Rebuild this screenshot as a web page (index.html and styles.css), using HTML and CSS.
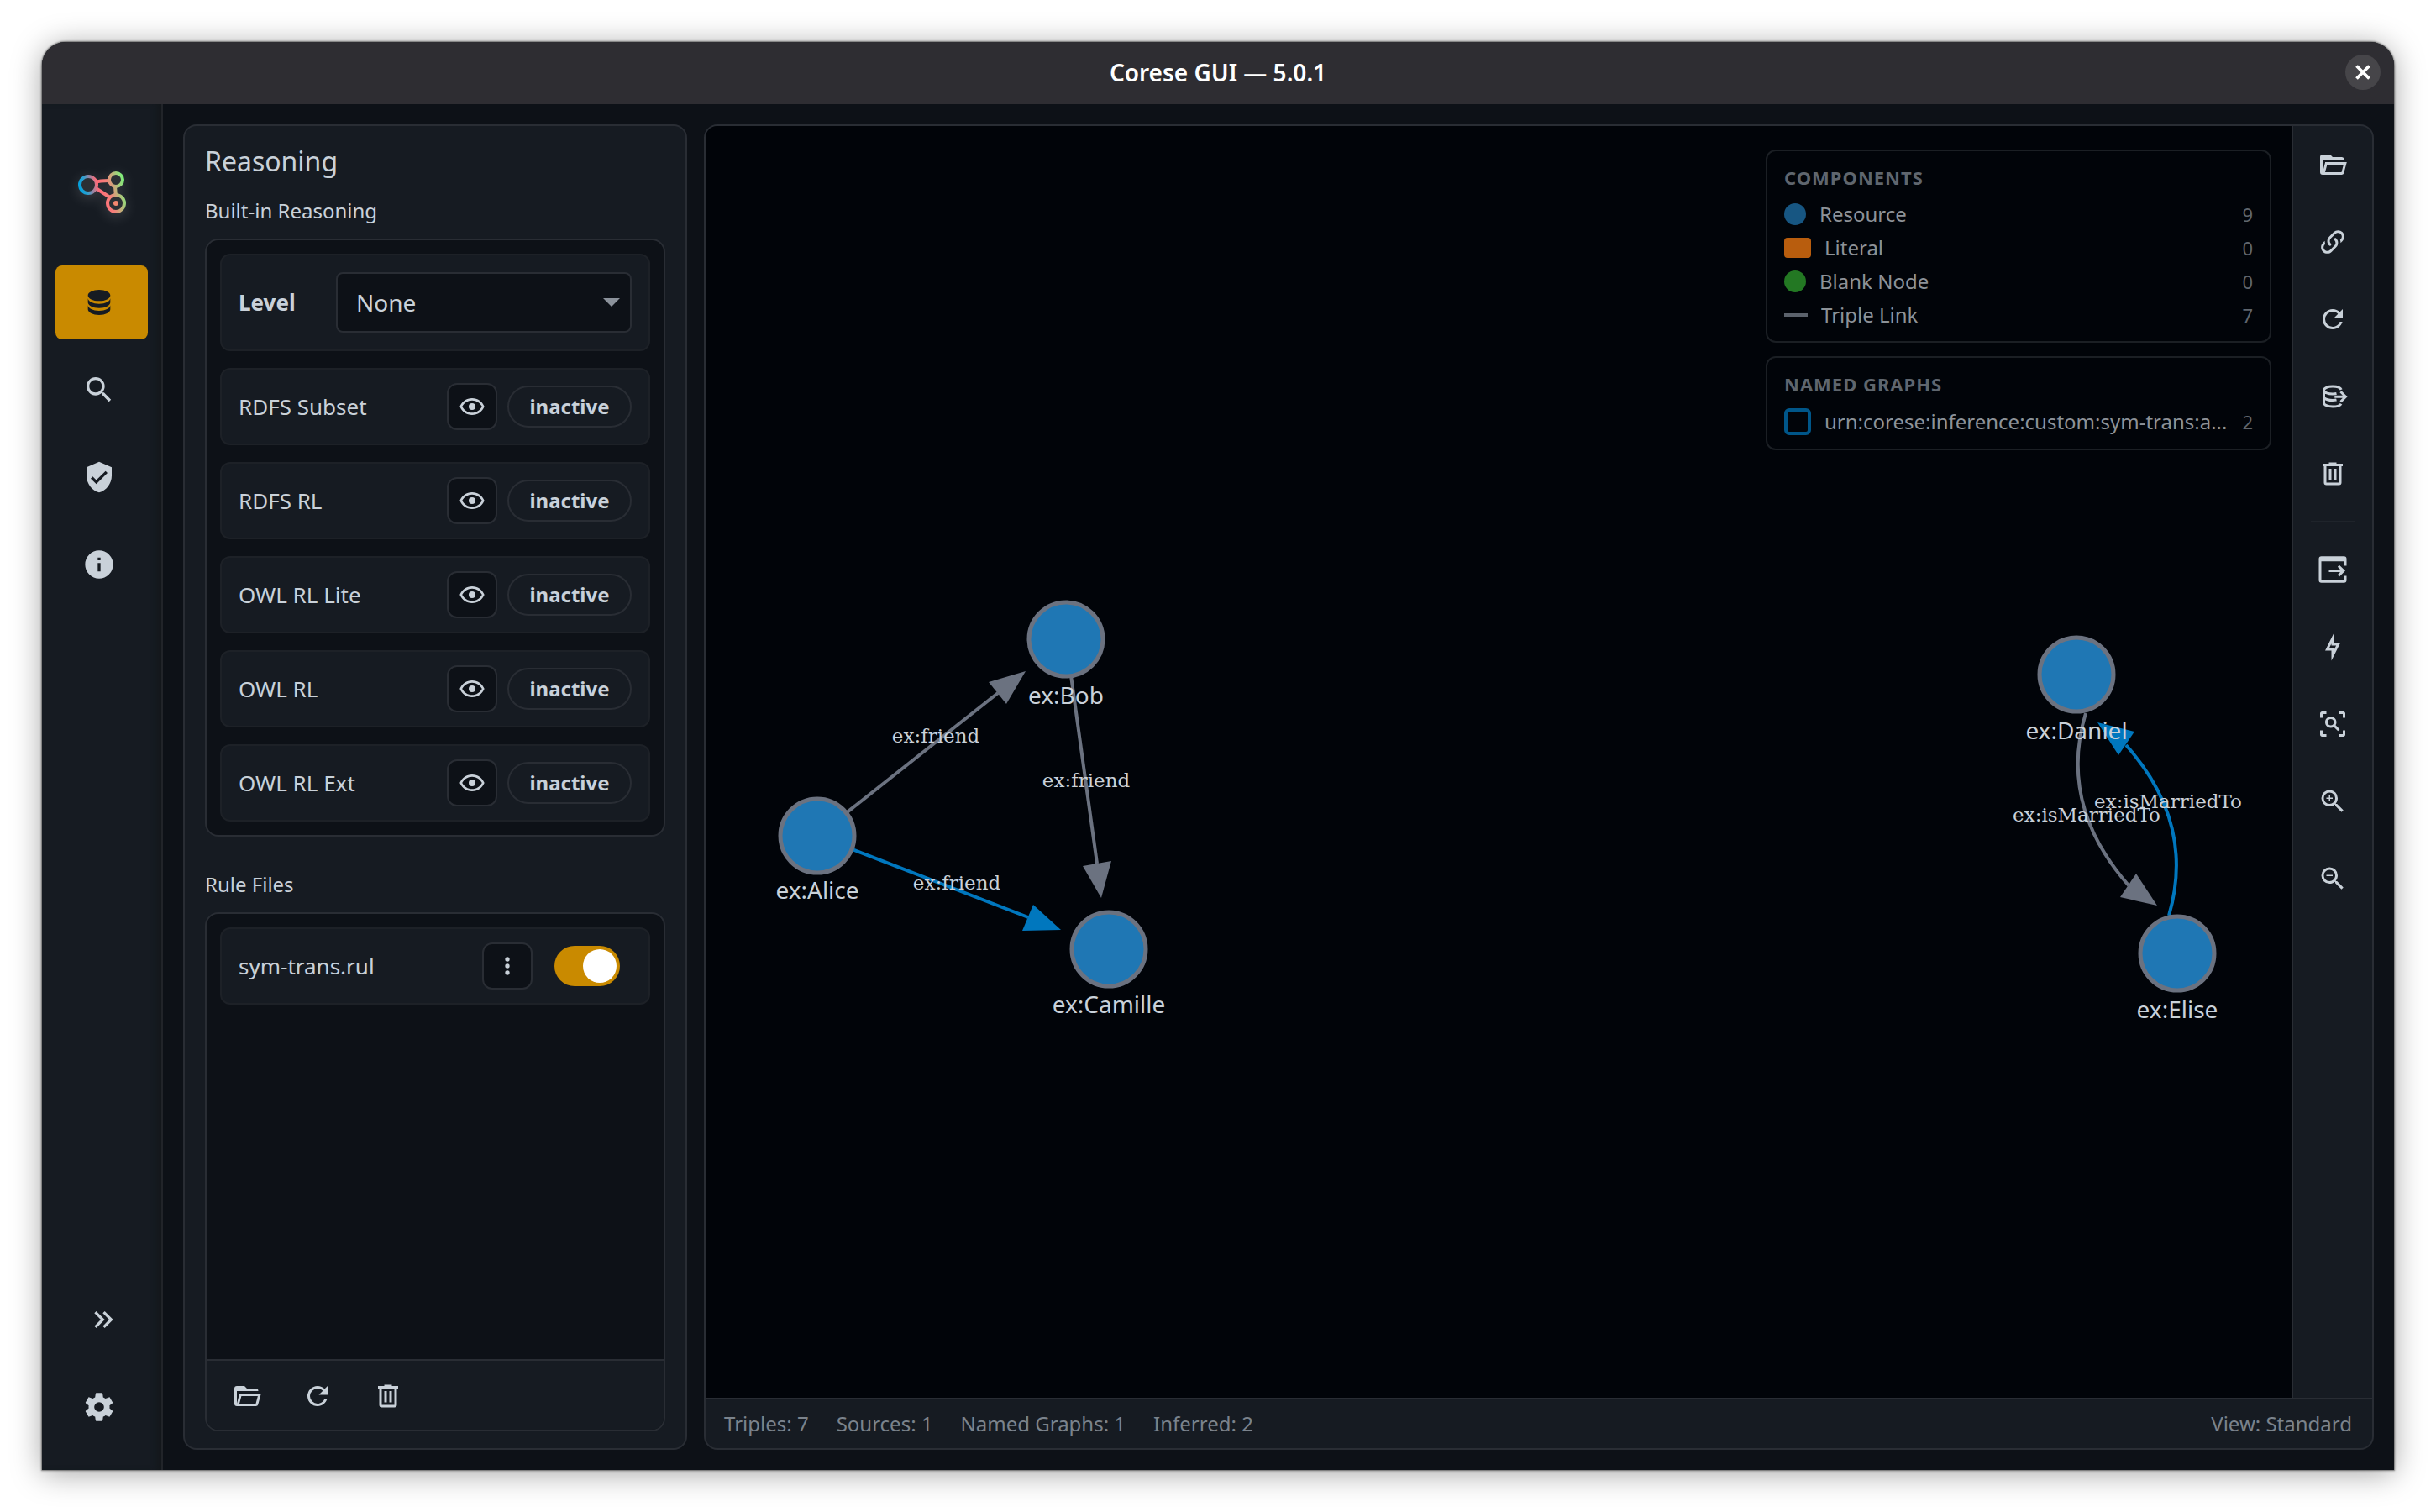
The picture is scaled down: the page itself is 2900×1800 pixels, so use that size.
FILE: index.html
```html
<!DOCTYPE html>
<html lang="en">
<head>
    <meta charset="UTF-8">
    <meta name="viewport" content="width=device-width, initial-scale=1.0">
    <title>Corese GUI — 5.0.1</title>
    <link rel="stylesheet" href="styles.css">
</head>
<body>
    <!-- Icon set -->
    <svg class="icon-defs" aria-hidden="true">
        <symbol id="i-database" viewBox="0 0 24 24"><path d="M12,3C7.58,3 4,4.79 4,7C4,9.21 7.58,11 12,11C16.42,11 20,9.21 20,7C20,4.79 16.42,3 12,3M4,9V12C4,14.21 7.58,16 12,16C16.42,16 20,14.21 20,12V9C20,11.21 16.42,13 12,13C7.58,13 4,11.21 4,9M4,14V17C4,19.21 7.58,21 12,21C16.42,21 20,19.21 20,17V14C20,16.21 16.42,18 12,18C7.58,18 4,16.21 4,14Z"/></symbol>
        <symbol id="i-search" viewBox="0 0 24 24"><path d="M9.5,3A6.5,6.5 0 0,1 16,9.5C16,11.11 15.41,12.59 14.44,13.73L14.71,14H15.5L20.5,19L19,20.5L14,15.5V14.71L13.73,14.44C12.59,15.41 11.11,16 9.5,16A6.5,6.5 0 0,1 3,9.5A6.5,6.5 0 0,1 9.5,3M9.5,5C7,5 5,7 5,9.5C5,12 7,14 9.5,14C12,14 14,12 14,9.5C14,7 12,5 9.5,5Z"/></symbol>
        <symbol id="i-shield" viewBox="0 0 24 24"><path d="M10,17L6,13L7.41,11.59L10,14.17L16.59,7.58L18,9M12,1L3,5V11C3,16.55 6.84,21.74 12,23C17.16,21.74 21,16.55 21,11V5L12,1Z"/></symbol>
        <symbol id="i-info" viewBox="0 0 24 24"><path d="M13,9H11V7H13M13,17H11V11H13M12,2A10,10 0 0,0 2,12A10,10 0 0,0 12,22A10,10 0 0,0 22,12A10,10 0 0,0 12,2Z"/></symbol>
        <symbol id="i-expand" viewBox="0 0 24 24"><path d="M5.59,7.41L7,6L13,12L7,18L5.59,16.59L10.17,12L5.59,7.41M11.59,7.41L13,6L19,12L13,18L11.59,16.59L16.17,12L11.59,7.41Z"/></symbol>
        <symbol id="i-cog" viewBox="0 0 24 24"><path d="M12,15.5A3.5,3.5 0 0,1 8.5,12A3.5,3.5 0 0,1 12,8.5A3.5,3.5 0 0,1 15.5,12A3.5,3.5 0 0,1 12,15.5M19.43,12.97C19.47,12.65 19.5,12.33 19.5,12C19.5,11.67 19.47,11.34 19.43,11L21.54,9.37C21.73,9.22 21.78,8.95 21.66,8.73L19.66,5.27C19.54,5.05 19.27,4.96 19.05,5.05L16.56,6.05C16.04,5.66 15.5,5.32 14.87,5.07L14.5,2.42C14.46,2.18 14.25,2 14,2H10C9.75,2 9.54,2.18 9.5,2.42L9.13,5.07C8.5,5.32 7.96,5.66 7.44,6.05L4.95,5.05C4.73,4.96 4.46,5.05 4.34,5.27L2.34,8.73C2.21,8.95 2.27,9.22 2.46,9.37L4.57,11C4.53,11.34 4.5,11.67 4.5,12C4.5,12.33 4.53,12.65 4.57,12.97L2.46,14.63C2.27,14.78 2.21,15.05 2.34,15.27L4.34,18.73C4.46,18.95 4.73,19.03 4.95,18.95L7.44,17.94C7.96,18.34 8.5,18.68 9.13,18.93L9.5,21.58C9.54,21.82 9.75,22 10,22H14C14.25,22 14.46,21.82 14.5,21.58L14.87,18.93C15.5,18.67 16.04,18.34 16.56,17.94L19.05,18.95C19.27,19.03 19.54,18.95 19.66,18.73L21.66,15.27C21.78,15.05 21.73,14.78 21.54,14.63L19.43,12.97Z"/></symbol>
        <symbol id="i-eye" viewBox="0 0 24 24"><path d="M12,9A3,3 0 0,1 15,12A3,3 0 0,1 12,15A3,3 0 0,1 9,12A3,3 0 0,1 12,9M12,4.5C17,4.5 21.27,7.61 23,12C21.27,16.39 17,19.5 12,19.5C7,19.5 2.73,16.39 1,12C2.73,7.61 7,4.5 12,4.5M3.18,12C4.83,15.36 8.24,17.5 12,17.5C15.76,17.5 19.17,15.36 20.82,12C19.17,8.64 15.76,6.5 12,6.5C8.24,6.5 4.83,8.64 3.18,12Z"/></symbol>
        <symbol id="i-dots" viewBox="0 0 24 24"><path d="M12,16A2,2 0 0,1 14,18A2,2 0 0,1 12,20A2,2 0 0,1 10,18A2,2 0 0,1 12,16M12,10A2,2 0 0,1 14,12A2,2 0 0,1 12,14A2,2 0 0,1 10,12A2,2 0 0,1 12,10M12,4A2,2 0 0,1 14,6A2,2 0 0,1 12,8A2,2 0 0,1 10,6A2,2 0 0,1 12,4Z"/></symbol>
        <symbol id="i-folder" viewBox="0 0 24 24"><path d="M6.1,10L4,18V8H21A2,2 0 0,0 19,6H12L10,4H4A2,2 0 0,0 2,6V18A2,2 0 0,0 4,20H19C19.9,20 20.7,19.4 20.9,18.5L23.2,10H6.1M19,18H6L7.6,12H20.6L19,18Z"/></symbol>
        <symbol id="i-link" viewBox="0 0 24 24"><path d="M10.59,13.41C11,13.8 11,14.44 10.59,14.83C10.2,15.22 9.56,15.22 9.17,14.83C7.22,12.88 7.22,9.71 9.17,7.76V7.76L12.71,4.22C14.66,2.27 17.83,2.27 19.78,4.22C21.73,6.17 21.73,9.34 19.78,11.29L18.29,12.78C18.3,11.96 18.17,11.14 17.89,10.36L18.36,9.88C19.54,8.71 19.54,6.81 18.36,5.64C17.19,4.46 15.29,4.46 14.12,5.64L10.59,9.17C9.41,10.34 9.41,12.24 10.59,13.41M13.41,9.17C13.8,8.78 14.44,8.78 14.83,9.17C16.78,11.12 16.78,14.29 14.83,16.24V16.24L11.29,19.78C9.34,21.73 6.17,21.73 4.22,19.78C2.27,17.83 2.27,14.66 4.22,12.71L5.71,11.22C5.7,12.04 5.83,12.86 6.11,13.65L5.64,14.12C4.46,15.29 4.46,17.19 5.64,18.36C6.81,19.54 8.71,19.54 9.88,18.36L13.41,14.83C14.59,13.66 14.59,11.76 13.41,10.59C13,10.2 13,9.56 13.41,9.17Z"/></symbol>
        <symbol id="i-refresh" viewBox="0 0 24 24"><path d="M17.65,6.35C16.2,4.9 14.21,4 12,4A8,8 0 0,0 4,12A8,8 0 0,0 12,20C15.73,20 18.84,17.45 19.73,14H17.65C16.83,16.33 14.61,18 12,18A6,6 0 0,1 6,12A6,6 0 0,1 12,6C13.66,6 15.14,6.69 16.22,7.78L13,11H20V4L17.65,6.35Z"/></symbol>
        <symbol id="i-db-export" viewBox="0 0 24 24"><path fill="none" stroke="currentColor" stroke-width="2" d="M18.8,6.6C18.2,5.1 15.4,4 12,4C8.1,4 5,5.3 5,7V17C5,18.7 8.1,20 12,20C15.2,20 17.9,19.1 18.7,17.8M5,7.5C6,9.2 8.8,10 12,10C13.2,10 14,9.9 15,9.7M5,13C6.5,14.3 9,15 12,15C13.2,15 14,14.9 15,14.7M13.5,12.2H22M18.3,8.2L22.3,12.2L18.3,16.2"/></symbol>
        <symbol id="i-trash" viewBox="0 0 24 24"><path d="M9,3V4H4V6H5V19A2,2 0 0,0 7,21H17A2,2 0 0,0 19,19V6H20V4H15V3H9M7,6H17V19H7V6M9,8V17H11V8H9M13,8V17H15V8H13Z"/></symbol>
        <symbol id="i-export" viewBox="0 0 24 24"><path d="M3,1.5H21A2,2 0 0,1 23,3.5V9H21V5.5H3V20.5H21V17H23V20.5A2,2 0 0,1 21,22.5H3A2,2 0 0,1 1,20.5V3.5A2,2 0 0,1 3,1.5M9,12H18L15.9,9.9L17.3,8.5L22,13L17.3,17.6L15.9,16.2L18,14H9V12Z"/></symbol>
        <symbol id="i-bolt" viewBox="0 0 24 24"><path d="M11,9.47V11H14.76L13,14.53V13H9.24L11,9.47M13,1L6,15H11V23L18,9H13V1Z"/></symbol>
        <symbol id="i-scan" viewBox="0 0 24 24"><path d="M17,22V20H20V17H22V20.5C22,20.89 21.84,21.24 21.54,21.54C21.24,21.84 20.89,22 20.5,22H17M7,22H3.5C3.11,22 2.76,21.84 2.46,21.54C2.16,21.24 2,20.89 2,20.5V17H4V20H7V22M17,2H20.5C20.89,2 21.24,2.16 21.54,2.46C21.84,2.76 22,3.11 22,3.5V7H20V4H17V2M7,2V4H4V7H2V3.5C2,3.11 2.16,2.76 2.46,2.46C2.76,2.16 3.11,2 3.5,2H7M10.5,6C13,6 15,8 15,10.5C15,11.38 14.75,12.2 14.31,12.9L17.57,16.16L16.16,17.57L12.9,14.31C12.2,14.75 11.38,15 10.5,15C8,15 6,13 6,10.5C6,8 8,6 10.5,6M10.5,8C9.12,8 8,9.12 8,10.5C8,11.88 9.12,13 10.5,13C11.88,13 13,11.88 13,10.5C13,9.12 11.88,8 10.5,8Z"/></symbol>
        <symbol id="i-zoom-in" viewBox="0 0 24 24"><path d="M15.5,14L20.5,19L19,20.5L14,15.5V14.71L13.73,14.43C12.59,15.41 11.11,16 9.5,16A6.5,6.5 0 0,1 3,9.5A6.5,6.5 0 0,1 9.5,3A6.5,6.5 0 0,1 16,9.5C16,11.11 15.41,12.59 14.43,13.73L14.71,14H15.5M9.5,14C12,14 14,12 14,9.5C14,7 12,5 9.5,5C7,5 5,7 5,9.5C5,12 7,14 9.5,14M12,10H10V12H9V10H7V9H9V7H10V9H12V10Z"/></symbol>
        <symbol id="i-zoom-out" viewBox="0 0 24 24"><path d="M15.5,14H14.71L14.43,13.73C15.41,12.59 16,11.11 16,9.5A6.5,6.5 0 0,0 9.5,3A6.5,6.5 0 0,0 3,9.5A6.5,6.5 0 0,0 9.5,16C11.11,16 12.59,15.41 13.73,14.43L14,14.71V15.5L19,20.5L20.5,19L15.5,14M9.5,14C7,14 5,12 5,9.5C5,7 7,5 9.5,5C12,5 14,7 14,9.5C14,12 12,14 9.5,14M7,9H12V10H7V9Z"/></symbol>
    </svg>

    <div class="window">
        <header class="titlebar">
            <h1>Corese GUI — 5.0.1</h1>
            <button type="button" class="close-button" aria-label="Close">
                <svg viewBox="0 0 16 16"><path d="M2 2l12 12M14 2L2 14"/></svg>
            </button>
        </header>

        <div class="body">
            <nav class="sidebar">
                <svg class="logo" viewBox="0 0 57 50" role="img" aria-label="Corese">
                    <defs>
                        <linearGradient id="logoGradient" gradientUnits="userSpaceOnUse" x1="2" y1="24" x2="54" y2="10">
                            <stop offset="0" stop-color="#00a0dc"/>
                            <stop offset="0.15" stop-color="#2a9fd0"/>
                            <stop offset="0.42" stop-color="#ff6b78"/>
                            <stop offset="0.62" stop-color="#f5807a"/>
                            <stop offset="1" stop-color="#7df07a"/>
                        </linearGradient>
                    </defs>
                    <g fill="#2b2f34" stroke="url(#logoGradient)" stroke-width="4">
                        <path d="M21 13C25 11 30 11 37 11M21 20L38 31"/>
                        <path d="M44 18L45 30"/>
                        <circle cx="12" cy="16" r="10"/>
                        <circle cx="45" cy="10" r="8"/>
                        <circle cx="45" cy="38" r="10"/>
                    </g>
                    <circle cx="45" cy="38" r="3" fill="#f5876f"/>
                </svg>
                <button type="button" class="nav-button active" aria-label="Data"><svg class="icon"><use href="#i-database"/></svg></button>
                <button type="button" class="nav-button" aria-label="Query"><svg class="icon"><use href="#i-search"/></svg></button>
                <button type="button" class="nav-button" aria-label="Validation"><svg class="icon"><use href="#i-shield"/></svg></button>
                <button type="button" class="nav-button" aria-label="About"><svg class="icon"><use href="#i-info"/></svg></button>
                <button type="button" class="nav-button expand" aria-label="Expand sidebar"><svg class="icon"><use href="#i-expand"/></svg></button>
                <button type="button" class="nav-button" aria-label="Settings"><svg class="icon"><use href="#i-cog"/></svg></button>
            </nav>

            <section class="panel reasoning">
                <h2>Reasoning</h2>
                <h3>Built-in Reasoning</h3>
                <div class="box built-in">
                    <div class="card">
                        <label for="level" class="level-label">Level</label>
                        <div class="dropdown">
                            <select id="level" name="level">
                                <option>None</option>
                                <option>RDFS Subset</option>
                                <option>RDFS RL</option>
                                <option>OWL RL Lite</option>
                                <option>OWL RL</option>
                                <option>OWL RL Ext</option>
                            </select>
                        </div>
                    </div>
                    <div class="card">
                        <span class="name">RDFS Subset</span>
                        <button type="button" class="small-button" aria-label="View RDFS Subset"><svg class="icon"><use href="#i-eye"/></svg></button>
                        <span class="state">inactive</span>
                    </div>
                    <div class="card">
                        <span class="name">RDFS RL</span>
                        <button type="button" class="small-button" aria-label="View RDFS RL"><svg class="icon"><use href="#i-eye"/></svg></button>
                        <span class="state">inactive</span>
                    </div>
                    <div class="card">
                        <span class="name">OWL RL Lite</span>
                        <button type="button" class="small-button" aria-label="View OWL RL Lite"><svg class="icon"><use href="#i-eye"/></svg></button>
                        <span class="state">inactive</span>
                    </div>
                    <div class="card">
                        <span class="name">OWL RL</span>
                        <button type="button" class="small-button" aria-label="View OWL RL"><svg class="icon"><use href="#i-eye"/></svg></button>
                        <span class="state">inactive</span>
                    </div>
                    <div class="card">
                        <span class="name">OWL RL Ext</span>
                        <button type="button" class="small-button" aria-label="View OWL RL Ext"><svg class="icon"><use href="#i-eye"/></svg></button>
                        <span class="state">inactive</span>
                    </div>
                </div>

                <h3>Rule Files</h3>
                <div class="box rule-files">
                    <div class="rule-list">
                        <div class="card">
                            <label for="symTrans" class="name">sym-trans.rul</label>
                            <button type="button" class="small-button" aria-label="Rule file menu"><svg class="icon"><use href="#i-dots"/></svg></button>
                            <input type="checkbox" id="symTrans" class="toggle" checked>
                        </div>
                    </div>
                    <div class="rule-actions">
                        <button type="button" class="tool-button" aria-label="Open rule file"><svg class="icon"><use href="#i-folder"/></svg></button>
                        <button type="button" class="tool-button" aria-label="Reload rules"><svg class="icon"><use href="#i-refresh"/></svg></button>
                        <button type="button" class="tool-button" aria-label="Remove rules"><svg class="icon"><use href="#i-trash"/></svg></button>
                    </div>
                </div>
            </section>

            <main class="panel graph">
                <div class="graph-area">
                    <svg class="graph-canvas" viewBox="0 0 1888 1514">
                        <g class="edges">
                            <path d="M133 845L348 675"/>
                            <path d="M429 611L466 878"/>
                            <path d="M1643 699Q1610 808 1694 904"/>
                            <path class="inferred" d="M133 845L384 942"/>
                            <path class="inferred" d="M1742 940Q1774 830 1691 737"/>
                        </g>
                        <g class="arrows">
                            <path d="M381 649L337 662L358 688Z"/>
                            <path d="M471 919L449 881L483 875Z"/>
                            <path d="M1728 928L1703 890L1684 918Z"/>
                            <path class="inferred" d="M423 957L390 927L377 958Z"/>
                            <path class="inferred" d="M1657 710L1701 721L1682 749Z"/>
                        </g>
                        <g class="nodes">
                            <circle cx="429" cy="611" r="44"/>
                            <circle cx="133" cy="845" r="44"/>
                            <circle cx="480" cy="980" r="44"/>
                            <circle cx="1632" cy="653" r="44"/>
                            <circle cx="1752" cy="985" r="44"/>
                        </g>
                        <g class="node-labels">
                            <text x="429" y="688">ex:Bob</text>
                            <text x="133" y="920">ex:Alice</text>
                            <text x="480" y="1056">ex:Camille</text>
                            <text x="1632" y="730">ex:Daniel</text>
                            <text x="1752" y="1062">ex:Elise</text>
                        </g>
                        <g class="edge-labels">
                            <text x="274" y="734">ex:friend</text>
                            <text x="453" y="787">ex:friend</text>
                            <text x="299" y="909">ex:friend</text>
                            <text x="1644" y="828">ex:isMarriedTo</text>
                            <text x="1741" y="812">ex:isMarriedTo</text>
                        </g>
                    </svg>

                    <aside class="legends">
                        <div class="legend">
                            <h4>COMPONENTS</h4>
                            <ul>
                                <li><span class="mark resource"></span><span class="text">Resource</span><span class="count">9</span></li>
                                <li><span class="mark literal"></span><span class="text">Literal</span><span class="count">0</span></li>
                                <li><span class="mark blank"></span><span class="text">Blank Node</span><span class="count">0</span></li>
                                <li><span class="mark link"></span><span class="text">Triple Link</span><span class="count">7</span></li>
                            </ul>
                        </div>
                        <div class="legend">
                            <h4>NAMED GRAPHS</h4>
                            <ul>
                                <li class="graph-name"><span class="mark named"></span><span class="text">urn:corese:inference:custom:sym-trans:a...</span><span class="count">2</span></li>
                            </ul>
                        </div>
                    </aside>
                </div>

                <div class="toolbar">
                    <button type="button" class="tool-button" aria-label="Open file"><svg class="icon"><use href="#i-folder"/></svg></button>
                    <button type="button" class="tool-button" aria-label="Load from URL"><svg class="icon"><use href="#i-link"/></svg></button>
                    <button type="button" class="tool-button" aria-label="Reload"><svg class="icon"><use href="#i-refresh"/></svg></button>
                    <button type="button" class="tool-button" aria-label="Export data"><svg class="icon"><use href="#i-db-export"/></svg></button>
                    <button type="button" class="tool-button" aria-label="Clear graph"><svg class="icon"><use href="#i-trash"/></svg></button>
                    <hr>
                    <button type="button" class="tool-button" aria-label="Export view"><svg class="icon"><use href="#i-export"/></svg></button>
                    <button type="button" class="tool-button" aria-label="Re-energize layout"><svg class="icon"><use href="#i-bolt"/></svg></button>
                    <button type="button" class="tool-button" aria-label="Fit to screen"><svg class="icon"><use href="#i-scan"/></svg></button>
                    <button type="button" class="tool-button" aria-label="Zoom in"><svg class="icon"><use href="#i-zoom-in"/></svg></button>
                    <button type="button" class="tool-button" aria-label="Zoom out"><svg class="icon"><use href="#i-zoom-out"/></svg></button>
                </div>

                <footer class="status">
                    <span>Triples: 7</span>
                    <span>Sources: 1</span>
                    <span>Named Graphs: 1</span>
                    <span>Inferred: 2</span>
                    <span class="view">View: Standard</span>
                </footer>
            </main>
        </div>
    </div>
</body>
</html>
```

FILE: styles.css
```css
* {
    box-sizing: border-box;
}
body {
    margin: 0;
    padding: 50px;
    height: 100vh;
    background-color: #fff;
    color: #c9d1d9;
    font-family: "Noto Sans", sans-serif;
    font-size: 24px;
    line-height: 32px;
}
h1, h2, h3, h4, ul {
    margin: 0;
    padding: 0;
}
button {
    display: flex;
    justify-content: center;
    align-items: center;
    padding: 0;
    border: none;
    background: none;
    color: inherit;
    cursor: pointer;
}
.icon-defs {
    display: none;
}
.icon {
    width: 36px;
    height: 36px;
    fill: currentColor;
}

/* Window frame */
.window {
    display: flex;
    flex-direction: column;
    height: 100%;
    border-radius: 28px 28px 0 0;
    overflow: hidden;
    background-color: #0d1117;
    box-shadow: 0 0 2px 1px rgba(0, 0, 0, 0.5), 0 4px 36px rgba(0, 0, 0, 0.36);
}
.titlebar {
    display: grid;
    grid-template-columns: 1fr auto 1fr;
    align-items: center;
    height: 74px;
    padding: 0 16px 2px;
    background-color: #2e2d32;
    color: #fff;
}
.titlebar h1 {
    grid-column: 2;
    font-size: 28px;
    font-weight: 600;
}
.close-button {
    justify-self: end;
    width: 42px;
    height: 42px;
    border-radius: 50%;
    background-color: #464549;
}
.close-button svg {
    width: 20px;
    height: 20px;
    fill: none;
    stroke: #fff;
    stroke-width: 3;
}
.body {
    display: flex;
    flex: 1;
    min-height: 0;
}

/* Sidebar */
.sidebar {
    display: flex;
    flex-direction: column;
    gap: 16px;
    width: 144px;
    padding: 80px 16px 31px;
    border-right: 2px solid #212429;
    background-color: #161b22;
    box-shadow: inset -8px 0 8px -4px #13171a;
}
.logo {
    width: 57px;
    height: 50px;
    margin: 0 auto 46px;
    overflow: visible;
    filter: drop-shadow(0 4px 8px rgba(255, 255, 255, 0.16));
}
.nav-button {
    height: 88px;
    padding-right: 6px;
    border-radius: 8px;
}
.nav-button .icon {
    width: 40px;
    height: 40px;
}
.nav-button.active {
    background-color: #c98a00;
    color: #161b22;
}
.nav-button.expand {
    margin-top: auto;
    padding-left: 4px;
    padding-right: 0;
}

/* Panels */
.panel {
    margin: 24px 0;
    border: 2px solid #292d34;
    border-radius: 16px;
    background-color: #161b22;
}
.reasoning {
    display: flex;
    flex-direction: column;
    width: 600px;
    margin-left: 24px;
    padding: 20px 24px;
}
.reasoning h2 {
    margin-bottom: 21px;
    font-size: 32px;
    font-weight: 400;
    line-height: 44px;
}
.reasoning h3 {
    margin-bottom: 17px;
    font-size: 24px;
    font-weight: 400;
}
.box {
    border: 2px solid #292d34;
    border-radius: 16px;
    background-color: #0d1117;
    overflow: hidden;
}
.built-in {
    display: flex;
    flex-direction: column;
    gap: 20px;
    margin-bottom: 41px;
    padding: 16px;
}
.card {
    display: flex;
    align-items: center;
    gap: 12px;
    padding: 16px 20px;
    border: 2px solid #1d2127;
    border-radius: 12px;
    background-color: #161b22;
    font-size: 26px;
}
.card .name {
    flex: 1;
}
.level-label {
    flex: 1;
    font-weight: 700;
}
.dropdown {
    position: relative;
    width: 352px;
    margin: 4px 0;
}
.dropdown select {
    display: block;
    appearance: none;
    width: 100%;
    height: 72px;
    padding: 0 22px;
    border: 2px solid #292d34;
    border-radius: 8px;
    background-color: #0d1117;
    color: #c9d1d9;
    font: inherit;
    font-size: 28px;
}
.dropdown::after {
    content: "";
    position: absolute;
    top: 31px;
    right: 14px;
    border: 10px solid transparent;
    border-top-color: #8b929b;
    border-bottom: none;
    pointer-events: none;
}
.small-button {
    width: 60px;
    height: 56px;
    border: 2px solid #292d34;
    border-radius: 12px;
    background-color: #0d1117;
}
.small-button .icon {
    width: 32px;
    height: 32px;
}
.state {
    width: 148px;
    border: 2px solid #292d34;
    border-radius: 25px;
    font-size: 24px;
    font-weight: 700;
    line-height: 46px;
    text-align: center;
}
.toggle {
    display: flex;
    justify-content: flex-end;
    align-items: center;
    appearance: none;
    width: 78px;
    height: 48px;
    margin: 0 14px;
    padding: 4px;
    border-radius: 24px;
    background-color: #c98a00;
    cursor: pointer;
}
.toggle::before {
    content: "";
    width: 40px;
    height: 40px;
    border-radius: 50%;
    background-color: #fff;
}
.toggle:not(:checked) {
    justify-content: flex-start;
    background-color: #30363d;
}
.rule-files {
    display: flex;
    flex-direction: column;
    flex: 1;
}
.rule-list {
    flex: 1;
    padding: 16px;
}
.rule-actions {
    display: flex;
    gap: 12px;
    padding: 6px 12px 4px;
    border-top: 2px solid #292d34;
    background-color: #161b22;
}
.tool-button {
    width: 72px;
    height: 72px;
}

/* Graph view */
.graph {
    display: grid;
    grid-template-columns: 1fr auto;
    grid-template-rows: 1fr auto;
    flex: 1;
    margin-left: 20px;
    margin-right: 24px;
    overflow: hidden;
}
.graph-area {
    position: relative;
    background-color: #010409;
}
.graph-canvas {
    position: absolute;
    inset: 0;
    width: 100%;
    height: 100%;
}
.edges path {
    fill: none;
    stroke: #6b7280;
    stroke-width: 4;
}
.edges .inferred {
    stroke: #0077be;
}
.arrows path {
    fill: #6b7280;
}
.arrows .inferred {
    fill: #0077be;
}
.nodes circle {
    fill: #1f77b4;
    stroke: #6b7280;
    stroke-width: 5;
}
.node-labels text,
.edge-labels text {
    fill: #c9d1d9;
    text-anchor: middle;
}
.node-labels text {
    font-size: 28px;
}
.edge-labels text {
    font-family: "DejaVu Serif", serif;
    font-size: 23px;
}

.legends {
    position: absolute;
    top: 28px;
    right: 24px;
    display: flex;
    flex-direction: column;
    gap: 16px;
    width: 602px;
}
.legend {
    padding: 16px 20px 11px;
    border: 2px solid #1b1f24;
    border-radius: 12px;
    background-color: #010409;
}
.legend h4 {
    margin-bottom: 9px;
    color: #5f666e;
    font-size: 22px;
    line-height: 30px;
    letter-spacing: 1px;
}
.legend ul {
    list-style-type: none;
}
.legend li {
    display: flex;
    align-items: center;
    gap: 16px;
    height: 40px;
    color: #8d9298;
}
.legend .graph-name {
    height: 42px;
}
.legend .text {
    flex: 1;
    overflow: hidden;
    white-space: nowrap;
    text-overflow: ellipsis;
}
.legend .count {
    color: #5f666e;
    font-size: 22px;
}
.mark {
    flex: none;
    width: 26px;
    height: 26px;
    border-radius: 50%;
}
.mark.resource {
    background-color: #175682;
}
.mark.literal {
    width: 32px;
    height: 24px;
    border-radius: 4px;
    background-color: #b85d0e;
}
.mark.blank {
    background-color: #237823;
}
.mark.link {
    width: 28px;
    height: 4px;
    border-radius: 0;
    background-color: #5b626c;
}
.mark.named {
    width: 32px;
    height: 32px;
    border: 4px solid #005689;
    border-radius: 6px;
}

.toolbar {
    display: flex;
    flex-direction: column;
    align-items: center;
    gap: 20px;
    width: 96px;
    padding-top: 10px;
    border-left: 2px solid #292d34;
}
.toolbar hr {
    width: 52px;
    height: 2px;
    margin: 0;
    border: none;
    background-color: #1f242b;
}
.status {
    grid-column: 1 / 3;
    display: flex;
    align-items: center;
    gap: 33px;
    height: 60px;
    padding: 0 24px 0 22px;
    border-top: 2px solid #292d34;
    color: #7b838c;
}
.status .view {
    margin-left: auto;
}
```
